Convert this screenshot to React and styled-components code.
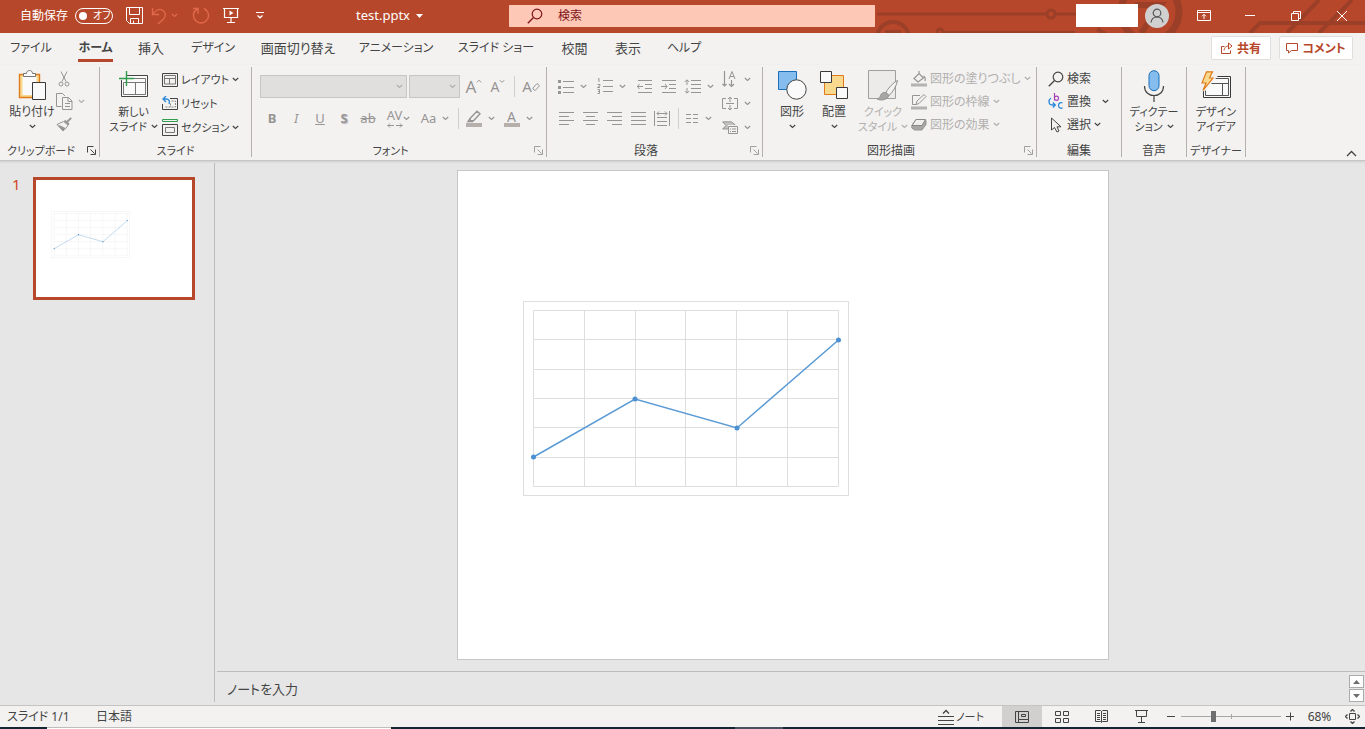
import React from 'react'
import styled, { createGlobalStyle, css } from 'styled-components'

const GlobalStyle = createGlobalStyle`
  * {
    box-sizing: border-box;
  }
  body {
    margin: 0;
    background: #e6e6e6;
    color: #444;
    font-family: 'Noto Sans', 'Noto Sans CJK JP', sans-serif;
    font-size: 12px;
    line-height: 15px;
    font-feature-settings: 'palt';
  }
  button, input, textarea {
    font: inherit;
    font-feature-settings: inherit;
    color: inherit;
    border: none;
    padding: 0;
    margin: 0;
    background: none;
  }
`

const Page = styled.div`
  display: flex;
  flex-direction: column;
  min-height: 100vh;
`

/* ---------- title bar ---------- */

const TitleBar = styled.header`
  position: relative;
  display: grid;
  grid-template-columns: 509fr 366fr 490fr;
  align-items: center;
  height: 33px;
  padding-bottom: 2px;
  background: #b7472a;
  color: #fff;
`
const Pattern = styled.svg`
  position: absolute;
  top: 0;
  right: 0;
`
const TitleLeft = styled.div`
  display: flex;
  align-items: center;
  padding-left: 20px;
`
const AutoSave = styled.label`
  display: flex;
  align-items: center;
  gap: 7px;
  margin-right: 12px;
  white-space: nowrap;
`
const Toggle = styled.span`
  display: flex;
  align-items: center;
  gap: 6px;
  width: 38px;
  height: 16px;
  padding-left: 3px;
  border: 1px solid #fff;
  border-radius: 8px;
  font-size: 10px;
`
const ToggleInput = styled.input`
  appearance: none;
  width: 8px;
  height: 8px;
  border-radius: 50%;
  background: #fff;
`
const QuickButton = styled.button`
  display: flex;
  justify-content: center;
  align-items: center;
  gap: ${p => p.$gap || 0}px;
  width: ${p => p.$w || 32}px;
  height: 24px;
  color: ${p => (p.disabled ? '#e0694b' : '#fff')};
`
const FileName = styled.button`
  display: flex;
  align-items: center;
  gap: 6px;
  margin-left: auto;
  margin-right: 86px;
  font-size: 13px;
`
const Search = styled.label`
  position: relative;
  display: flex;
  align-items: center;
  gap: 15px;
  height: 22px;
  padding-left: 18px;
  background: #fdc8b5;
  color: #80141c;
`
const SearchInput = styled.input`
  flex: 1;
  min-width: 0;
  outline: none;
  &::placeholder {
    color: #80141c;
    opacity: 1;
  }
`
const TitleRight = styled.div`
  position: relative;
  display: flex;
  align-items: center;
  justify-content: flex-end;
`
const Account = styled.div`
  width: 62px;
  height: 23px;
  margin-right: 7px;
  background: #fff;
`
const Avatar = styled.button`
  display: flex;
  align-items: center;
  justify-content: center;
  width: 24px;
  height: 24px;
  margin-right: 12px;
  border-radius: 50%;
  background: #d0d0d0;
  color: #555;
`
const WindowButton = styled.button`
  display: flex;
  align-items: center;
  justify-content: center;
  width: 46px;
  height: 30px;
  color: #fff;
`

/* ---------- tabs ---------- */

const TabBar = styled.nav`
  display: flex;
  align-items: center;
  height: 32px;
  padding: 0 12px 2px 0;
  background: #f3f2f1;
`
const Tab = styled.button`
  display: flex;
  justify-content: center;
  width: ${p => p.$w}px;
  height: 28px;
  font-size: ${p => (p.$kana ? 12 : 13)}px;
  line-height: 28px;
  white-space: nowrap;
  ${p => p.$active && css`
    font-weight: 700;
  `}
`
const TabText = styled.span`
  height: 28px;
  border-bottom: ${p => (p.$active ? '3px solid #b7472a' : 'none')};
`
const ShareButton = styled.button`
  display: flex;
  align-items: center;
  justify-content: center;
  gap: 4px;
  width: ${p => p.$w}px;
  height: 24px;
  margin-left: ${p => (p.$first ? 'auto' : '8px')};
  border: 1px solid #e1dfdd;
  border-radius: 2px;
  background: #fff;
  color: #b7472a;
  font-weight: 700;
  white-space: nowrap;
`

/* ---------- ribbon ---------- */

const Ribbon = styled.section`
  display: flex;
  height: 96px;
  padding-top: 2px;
  background: #f3f2f1;
  border-bottom: 1px solid #c8c6c4;
  box-shadow: 0 1px 2px #d0cecc;
  z-index: 1;
`
const Group = styled.div`
  display: flex;
  flex-direction: column;
  flex: none;
  width: ${p => p.$w}px;
  height: 90px;
  border-right: 1px solid #b3b0ad;
`
const GroupBody = styled.div`
  display: flex;
  flex: 1;
  padding-left: ${p => p.$pad || 0}px;
`
const GroupFoot = styled.div`
  display: flex;
  align-items: center;
  height: 13px;
  white-space: nowrap;
`
const GroupName = styled.span`
  flex: 1;
  text-align: center;
  font-size: ${p => (p.$kana ? 11 : 12)}px;
`
const Launcher = styled.button`
  display: flex;
  width: 12px;
  margin-left: 5px;
  color: ${p => (p.disabled ? '#a19f9d' : '#444')};
`
const BigButton = styled.button`
  display: flex;
  flex-direction: column;
  align-items: center;
  width: ${p => p.$w}px;
  height: 68px;
  font-size: ${p => (p.$kana ? 11 : 12)}px;
  color: ${p => (p.disabled ? '#b1afad' : '#444')};
  white-space: nowrap;
`
const BigIcon = styled.span`
  display: flex;
  align-items: center;
  justify-content: center;
  height: 37px;
`
const BigLine = styled.span`
  display: flex;
  align-items: center;
  justify-content: center;
  gap: 4px;
  height: 15px;
`
const Stack = styled.div`
  display: flex;
  flex-direction: column;
  gap: ${p => p.$gap || 0}px;
  padding-top: ${p => p.$gap || 0}px;
`
const SmallButton = styled.button`
  display: flex;
  align-items: center;
  gap: ${p => p.$gap || 3}px;
  height: 23px;
  font-size: ${p => (p.$kana ? 11 : 12)}px;
  color: ${p => (p.disabled ? '#b1afad' : '#444')};
  white-space: nowrap;
  svg:first-child {
    color: ${p => (p.disabled ? '#979593' : '#444')};
  }
`
const WideLabel = styled.span`
  width: 32px;
  text-align: left;
`
const FontRows = styled.div`
  display: flex;
  flex-direction: column;
  gap: 8px;
  padding-top: 7px;
`
const Row = styled.div`
  display: flex;
  align-items: center;
  height: 24px;
`
const Combo = styled.button`
  display: flex;
  align-items: center;
  justify-content: flex-end;
  width: ${p => p.$w}px;
  height: 23px;
  margin-right: 2px;
  padding-right: 3px;
  border: 1px solid #c8c6c4;
  background: #e1dfdd;
  color: #b1afad;
`
const Tool = styled.button`
  display: flex;
  align-items: center;
  justify-content: center;
  gap: ${p => (p.$tight ? 0 : 6)}px;
  width: ${p => p.$w || 24}px;
  height: 24px;
  color: #979593;
`
const Glyph = styled.span`
  font-size: ${p => p.$size || 13}px;
  font-weight: ${p => (p.$bold ? 700 : 400)};
  font-style: ${p => (p.$italic ? 'italic' : 'normal')};
  text-decoration: ${p => p.$line || 'none'};
  text-shadow: ${p => (p.$shadow ? '1px 1px 1px #b5b9c4' : 'none')};
`
const Rule = styled.span`
  width: 1px;
  height: 21px;
  margin: 0 4px;
  background: #d2d0ce;
`
const Collapse = styled.button`
  align-self: flex-end;
  margin-left: auto;
  padding: 0 8px 0 0;
`

/* ---------- workspace ---------- */

const Workspace = styled.main`
  display: flex;
  flex: 1;
  min-height: 0;
  padding-top: 2px;
`
const Thumbs = styled.aside`
  display: flex;
  align-items: flex-start;
  flex: none;
  width: 215px;
  margin-bottom: 3px;
  padding: 14px 0 0 12px;
  border-right: 1px solid #bebcba;
`
const ThumbNumber = styled.span`
  width: 21px;
  color: #d24726;
  font-size: 15px;
`
const Thumb = styled.button`
  width: 162px;
  border: 3px solid #b7472a;
  background: #fff;
  svg {
    display: block;
    width: 100%;
  }
`
const Editor = styled.div`
  display: flex;
  flex-direction: column;
  flex: 1;
  min-width: 0;
  padding-left: 2px;
`
const Canvas = styled.div`
  display: flex;
  justify-content: center;
  flex: 1;
  padding: 7px 16px 11px 0;
`
const Slide = styled.div`
  width: 652px;
  border: 1px solid #c6c6c6;
  background: #fff;
  svg {
    display: block;
    width: 100%;
    height: 100%;
  }
`
const Notes = styled.div`
  display: flex;
  align-items: center;
  height: 34px;
  border-top: 1px solid #bebcba;
`
const NotesInput = styled.textarea`
  flex: 1;
  height: 20px;
  padding-left: 10px;
  resize: none;
  outline: none;
  font-size: 13px;
  line-height: 20px;
  &::placeholder {
    color: #444;
    opacity: 1;
  }
`
const Pager = styled.div`
  display: flex;
  flex-direction: column;
  gap: 1px;
  padding-right: 1px;
`
const PagerButton = styled.button`
  display: flex;
  align-items: center;
  justify-content: center;
  width: 15px;
  height: 13px;
  border: 1px solid #ababab;
  background: #fff;
  color: #6e6e6e;
`

/* ---------- status bar ---------- */

const StatusBar = styled.footer`
  display: flex;
  align-items: center;
  height: 22px;
  padding-left: 7px;
  border-top: 1px solid #c6c4c2;
  background: #f3f2f1;
`
const StatusText = styled.span`
  width: ${p => p.$w}px;
`
const NotesToggle = styled.button`
  display: flex;
  align-items: center;
  gap: 2px;
  margin-left: auto;
  margin-right: 18px;
  font-size: 11px;
`
const ViewButton = styled.button`
  display: flex;
  align-items: center;
  justify-content: center;
  width: 40px;
  height: 21px;
  background: ${p => (p.$active ? '#d2d0ce' : 'none')};
`
const ZoomButton = styled.button`
  display: flex;
  justify-content: center;
  align-items: center;
  width: 19px;
  height: 20px;
`
const ZoomSlider = styled.input`
  appearance: none;
  width: 100px;
  height: 14px;
  background:
    linear-gradient(#a6a6a6, #a6a6a6) 50px center / 1px 5px no-repeat,
    linear-gradient(#a6a6a6, #a6a6a6) center / 100% 1px no-repeat;
  &::-webkit-slider-thumb {
    appearance: none;
    width: 5px;
    height: 11px;
    background: #6e6e6e;
  }
`
const ZoomValue = styled.button`
  width: 39px;
`
const FitButton = styled.button`
  display: flex;
  justify-content: center;
  width: 26px;
`
const Taskbar = styled.div`
  display: flex;
  height: 2px;
  background: #152534;
`
const TaskbarField = styled.div`
  width: 344px;
  margin-left: 47px;
  border-top: 1px solid #bebebe;
  background: #fff;
`
const TaskbarItem = styled.div`
  width: 48px;
  margin-left: 344px;
  background: #4a5261;
`

/* ---------- icons ---------- */

const Icon = ({ w = 16, h = 16, children }) => (
  <svg width={w} height={h} viewBox={`0 0 ${w} ${h}`} fill="none" stroke="currentColor" aria-hidden="true">
    {children}
  </svg>
)

const Chevron = () => (
  <Icon w={7} h={5}><path d="M.8 1l2.7 2.4L6.200 1" strokeWidth="1.200" /></Icon>
)

const SaveIcon = () => (
  <Icon w={17} h={17}><path d="M.5.5h16v16h-13l-3-3zM3.500.5v7h10v-7M4.500 16.500v-5h8v5M7.500 16.500v-3" /></Icon>
)
const UndoIcon = () => (
  <Icon w={16} h={18}><path d="M1.500 1v6.500H8M1.800 7.200C5 2.500 9 1.500 12 3.500c3 2.200 3 6 .5 8.500L7 17" strokeWidth="1.400" /></Icon>
)
const RedoIcon = () => (
  <Icon w={18} h={18}><path d="M1 1.500h5v5M5.800 2C2 3.800.8 7.500 2 11c1.500 4 6 6 10 4.300 4-1.800 5.500-6 3.800-10C15 3.500 13.500 2.200 12 1.500" strokeWidth="1.400" /></Icon>
)
const PresentIcon = () => (
  <Icon w={16} h={17}><path d="M0 1.500h16M1.500 1.500v9h13v-9M8 10.500v5M4 15.500h8" strokeWidth="1.200" /><path d="M6.500 3.500v5l4-2.500z" fill="currentColor" stroke="none" /></Icon>
)
const CustomizeIcon = () => (
  <Icon w={8} h={7}><path d="M0 .5h8" /><path d="M1.500 3.500L4 5.800l2.500-2.300" strokeWidth="1.300" /></Icon>
)
const SearchIcon = () => (
  <Icon><circle cx="10" cy="6" r="4.800" strokeWidth="1.200" /><path d="M6.500 9.500L.8 15.200" strokeWidth="1.300" /></Icon>
)
const PersonIcon = () => (
  <Icon w={14} h={15}><circle cx="7" cy="5" r="3.800" strokeWidth="1.200" /><path d="M1 14.500c.5-3.500 3-5.500 6-5.500s5.500 2 6 5.500" strokeWidth="1.200" /></Icon>
)
const RibbonModeIcon = () => (
  <Icon w={14} h={11}><path d="M.5.5h13v10H.5zM.5 2.500h13M7 9V4.500M5 6.300l2-2 2 2" /></Icon>
)

const PasteIcon = () => (
  <Icon w={28} h={31}>
    <path d="M1.500 4.500h20v23h-20z" fill="#f9d98e" stroke="#e07b1a" strokeWidth="1.400" />
    <path d="M4.500 6.500h14v18.500h-14z" fill="#fafafa" stroke="none" />
    <path d="M5.500 6.500v-3h3c0-4 6-4 6 0h3v3z" fill="#fafafa" stroke="#777" />
    <path d="M14.500 12.500h13v17h-13z" fill="#fafafa" stroke="#3a3a3a" />
  </Icon>
)
const CutIcon = () => (
  <Icon w={16} h={16}><path d="M5 .5l5 10M11 .5l-5 10" /><circle cx="5" cy="13" r="2" /><circle cx="11" cy="13" r="2" /></Icon>
)
const CopyIcon = () => (
  <Icon w={17} h={17}><path d="M5.500 13.500h-5V.5h6l2.500 2.500M6.500 4.500h6l3.500 3.500v8.500H6.500zM12 4.500v4h4M9 10.500h5M9 13.500h5" /></Icon>
)
const BrushIcon = () => (
  <Icon w={16} h={15}>
    <path d="M15.200.8L11 5M8.500 3.500l4.500 4" strokeWidth="1.800" />
    <path d="M7.500 4.500L1 7.500l6 6.500c2-1.500 3.800-3.500 5-6z" />
    <path d="M3 8l6.500 3L7 14 2.500 9z" fill="currentColor" stroke="none" />
  </Icon>
)
const NewSlideIcon = () => (
  <Icon w={31} h={30}>
    <path d="M3.500 4.500h26v21h-26z" stroke="#444" fill="#fafafa" />
    <path d="M5.500 11.500h22v12h-22zM5.500 7.500h22v4M17.500 11.500v12" stroke="#777" />
    <path d="M2 0h7v9H2z" fill="#f3f2f1" stroke="none" />
    <path d="M8.500 0v15M1 7.500h15" stroke="#2e9e4c" strokeWidth="1.400" />
  </Icon>
)
const LayoutIcon = () => (
  <Icon w={16} h={14}><path d="M.5.5h15v13H.5z" /><path d="M2.500 2.500h11v8.500h-11zM2.500 5.500h11M7.500 5.500v5.500" stroke="#777" /></Icon>
)
const ResetIcon = () => (
  <Icon w={16} h={15}>
    <path d="M8 2.500h7.500v11H.5V8" />
    <path d="M9.500 5h4v6h-11M8.500 7.500v3.500" stroke="#888" strokeDasharray="2 1" />
    <path d="M4 0L1 3l3 3M1 3h3c3 0 4 2 3 5" stroke="#2b88d8" strokeWidth="1.300" />
  </Icon>
)
const SectionIcon = () => (
  <Icon w={16} h={17}><path d="M.5.5h15v2H.5z" stroke="#2e9e4c" /><path d="M.5 5.500h15v11H.5z" /><path d="M3.500 8.500h9v5h-9z" stroke="#777" /></Icon>
)
const LauncherIcon = () => (
  <Icon w={9} h={9}><path d="M.5 6.500v-6h6M3.500 3.500l4 4M8.500 3.500v5h-5" /></Icon>
)
const ResizeMark = ({ down }) => (
  <Icon w={6} h={14}><path d={down ? 'M.8 1.200L3 3.400l2.200-2.200' : 'M.8 3.400L3 1.200l2.200 2.200'} /></Icon>
)
const EraserIcon = () => (
  <Icon w={8} h={12}><path d="M1 8l4-4.500 2.500 2.200-4 4.500H2.200L1 9z" /></Icon>
)
const SpacingIcon = () => (
  <Icon w={16} h={5}><path d="M.5 2.500H7M9 2.500h6.500M3 .5l-2 2 2 2M13 .5l2 2-2 2" /></Icon>
)
const HighlighterIcon = () => (
  <Icon w={16} h={17}><path d="M4 8.500L11 1.200l3 2.600-6.500 7H4.500zM4.500 8L2 11.500h5" strokeWidth="1.400" /><path d="M0 13h16v4H0z" fill="#b5b0ac" stroke="none" /></Icon>
)
const FontColorBar = styled.span`
  width: 16px;
  height: 17px;
  border-bottom: 4px solid #b5b0ac;
  font-size: 14px;
  line-height: 13px;
  text-align: center;
`

// each row is the start and end of one stroke
const LinesIcon = ({ rows }) => (
  <Icon w={15} h={13}>
    {rows.map(([a, b], i) => <path key={i} d={`M${a} ${i * 4 + 0.5}H${b}`} />)}
  </Icon>
)
const BulletIcon = () => (
  <Icon w={16} h={15}><path d="M5 2.500h11M5 8.500h11M5 13.500h11" /><path d="M0 1h3v3H0zM0 7h3v3H0zM0 12h3v3H0z" fill="currentColor" stroke="none" /></Icon>
)
const NumberIcon = () => (
  <Icon w={16} h={16}><path d="M6 2.500h10M6 8.500h10M6 13.500h10M1 1l1-.5V4M.5 6.500H3v1.200L.5 9.500H3M.5 11.500h2v4h-2M1 13.500h1.500" /></Icon>
)
const IndentIcon = ({ out }) => (
  <Icon w={15} h={13}><path d="M1 .5h14M8 4.500h7M8 8.500h7M1 12.500h14M0 6.500h6" /><path d={out ? 'M2.500 4l-2 2.500 2 2.500' : 'M4 4l2 2.500L4 9'} /></Icon>
)
const LineHeightIcon = () => (
  <Icon w={17} h={15}><path d="M7 1.500h10M7 5.500h10M7 9.500h10M7 13.500h10M3 1v5M3 9v5M.8 3L3 .8 5.200 3M.8 12L3 14.200 5.200 12" /></Icon>
)
const DistributeIcon = () => (
  <Icon w={16} h={17}><path d="M.5 1v15M15.500 1v15M3 7.500h10M3 11.500h10M3 15.500h10M3 3.500h10M5 1.500l-2 2 2 2M11 1.500l2 2-2 2" /></Icon>
)
const ColumnsIcon = () => (
  <Icon w={13} h={9}><path d="M0 .5h5M0 4.500h5M0 8.500h5M7 .5h5M7 4.500h5M7 8.500h5" /></Icon>
)
const TextDirectionIcon = () => (
  <Icon w={16} h={17}><path d="M2.500 0v15M.5 13l2 2 2-2M9.500 9v6M7 13l2.500 2.500L12 13" strokeWidth="1.200" /><path d="M7 8l3-7.500L13 8M8 5.500h4" /></Icon>
)
const AlignTextIcon = () => (
  <Icon w={16} h={15}><path d="M4 2.500H.5v10H4M12 2.500h3.500v10H12M4 7.500h8M8 1v5M8 9v5M6 3l2-2 2 2M6 12l2 2 2-2" /></Icon>
)
const SmartArtIcon = () => (
  <Icon w={16} h={13}><path d="M0 1h10l4 3H6v4H0l4-3.500z" fill="#c4c2c0" stroke="none" /><path d="M6 8H.8L4 4.500.8.800H9.500l3.500 3M6.500 5.500h9v7h-9zM8 8h1M10 8h4M8 10.500h1M10 10.500h4" /></Icon>
)

const ShapesIcon = () => (
  <Icon w={29} h={29}><path d="M.5.5h18v18H.5z" fill="#84bdee" stroke="#1a6fb8" /><circle cx="18.500" cy="18.500" r="9.700" fill="#fafafa" stroke="#444" /></Icon>
)
const ArrangeIcon = () => (
  <Icon w={28} h={29}>
    <path d="M4.500 4.500h19v19h-19z" fill="#f9d98e" stroke="#e07b1a" />
    <path d="M.5.500h11v11H.5zM16.500 16.500h11v11h-11z" fill="#fafafa" stroke="#3a3a3a" />
  </Icon>
)
const QuickStyleIcon = () => (
  <Icon w={30} h={31}>
    <path d="M.5.5h27v28H.5z" fill="#ecebea" stroke="#a19f9d" />
    <path d="M29.500 10.500c-4 2-9 7-11.500 12l3 3c4-4 7.500-9 8.500-15z" fill="#f3f2f1" stroke="#8f8d8b" />
    <path d="M18 22.500c-3-.5-5 1-5.500 3s-1.500 3-3.500 3.500c4 2 10 1 12-3.500z" fill="#a8a6a4" stroke="#979593" />
  </Icon>
)
const FillIcon = () => (
  <Icon w={16} h={16}><path d="M3 7.500L8 2.500l4.500 4.500L7 11zM8 2.500V0M12.500 5c2 1 2 3 1.500 5" strokeWidth="1.200" /><path d="M0 12.500h16v3H0z" fill="#b5b3b1" stroke="none" /></Icon>
)
const OutlineIcon = () => (
  <Icon w={16} h={16}><path d="M9 1.500H1.500v9H5M5 10.500l1-3.500 7-6.500 2 2-7 7z" /><path d="M0 12.500h16v3H0z" fill="#b5b3b1" stroke="none" /></Icon>
)
const EffectIcon = () => (
  <Icon w={16} h={14}><path d="M5 1.500h8.500l1.500 1v4L11 12H3.500L.8 10V7.500z" fill="#a8a6a4" /><path d="M5 1.500h9.500L11 7.500H1z" fill="#eee" stroke="#8a8886" /></Icon>
)
const ReplaceIcon = () => (
  <Icon w={16} h={17}>
    <path d="M6.500 0v7.500M6.500 4.500c1-2 4-1.800 4 .8s-3 2.700-4 .7" stroke="#a33fb5" strokeWidth="1.200" />
    <path d="M14.500 10c-1.500-1-4 0-4 2.500s2.500 3.400 4 2.200" stroke="#2b88d8" strokeWidth="1.300" />
    <path d="M3 5C0 7 .5 12 4 12h3M4.800 9.500L7.300 12l-2.500 2.500" stroke="#2b88d8" strokeWidth="1.300" />
  </Icon>
)
const CursorIcon = () => (
  <Icon w={16} h={16}><path d="M3.500 1v12l3-2.500L9 15l2-1-2-4.200h4z" /></Icon>
)
const MicIcon = () => (
  <Icon w={22} h={32}><rect x="6" y=".7" width="10" height="20" rx="5" fill="#84bdee" stroke="#1a6fb8" /><path d="M1.500 16c0 6 4 9.500 9.500 9.500s9.500-3.500 9.500-9.500M11 25.500V32" strokeWidth="1.200" /></Icon>
)
const IdeasIcon = () => (
  <Icon w={30} h={30}>
    <path d="M2.500 5.500h27v21h-27z" stroke="#3a3a3a" fill="#fafafa" />
    <path d="M4.500 7.500h23v17h-23zM10 12.500h17.500M21.500 12.500v12" stroke="#555" />
    <path d="M6 .8h6L9 7h3.500L2 19.500 5 12H1z" fill="#f9d98e" stroke="#f3f2f1" strokeWidth="4" />
    <path d="M5.500.8h6L8.500 7H12L2 19.500 5 12H1z" fill="#f9d98e" stroke="#e07b1a" strokeWidth="1.200" />
  </Icon>
)
const ShareIcon = () => (
  <Icon w={12} h={12}><path d="M3.500 4.500h-3v7h9v-3M3 8.500C3.500 5 5.500 4 8 4M7.500 1L11 4 7.500 7z" /></Icon>
)
const CommentIcon = () => (
  <Icon w={12} h={12}><path d="M.5 1.500h11v7h-6l-3 2.500V8.500h-2z" /></Icon>
)

/* ---------- slide content ---------- */

const points = [[75.5, 286], [177, 228], [279, 257], [380.5, 169]]
const steps = [0, 1, 2, 3, 4, 5, 6]

const Chart = () => (
  <svg viewBox="0 0 650 488" role="img" aria-label="折れ線グラフ">
    <g fill="none" stroke="#dedede">
      <rect x="65.500" y="130.500" width="325" height="194" />
      {steps.map(i => <path key={`h${i}`} d={`M75.500 ${Math.round(139 + i * 29.3) + 0.5}H380.500`} />)}
      {steps.map(i => <path key={`v${i}`} d={`M${Math.round(75 + i * 50.8) + 0.5} 139.500V315.500`} />)}
    </g>
    <polyline points={points.join(' ')} fill="none" stroke="#5b9bd5" strokeWidth="1.500" />
    {points.map(([x, y]) => <circle key={x} cx={x} cy={y} r="2.500" fill="#4a90d2" />)}
  </svg>
)

const tabs = [
  { name: 'ファイル', w: 62, kana: true },
  { name: 'ホーム', w: 67, kana: true, active: true },
  { name: '挿入', w: 44 },
  { name: 'デザイン', w: 80, kana: true },
  { name: '画面切り替え', w: 90 },
  { name: 'アニメーション', w: 106, kana: true },
  { name: 'スライド ショー', w: 94, kana: true },
  { name: '校閲', w: 63 },
  { name: '表示', w: 44 },
  { name: 'ヘルプ', w: 68, kana: true },
]

const RibbonGroup = ({ name, w, pad, kana, launcher, disabled, children }) => (
  <Group $w={w}>
    <GroupBody $pad={pad}>{children}</GroupBody>
    <GroupFoot>
      <GroupName $kana={kana}>{name}</GroupName>
      {launcher && <Launcher disabled={disabled} aria-label={`${name}の設定`}><LauncherIcon /></Launcher>}
    </GroupFoot>
  </Group>
)

const App = () => {
  return (
    <Page>
      <GlobalStyle />
      <TitleBar>
        <Pattern width="490" height="33" viewBox="0 0 490 33" fill="none" stroke="#9b3f28" strokeWidth="4">
          <path d="M2 14h170M181 14h80" strokeWidth="3" />
          <circle cx="176" cy="14" r="4" strokeWidth="3" />
          <circle cx="18" cy="38" r="16" />
          <path d="M10 32h16" />
          <path d="M68 33h132" />
          <circle cx="65" cy="32" r="3" strokeWidth="3" />
          <path d="M222 29l10 6" />
          <circle cx="275" cy="12" r="29" strokeWidth="7" />
          <path d="M260 5h26l-20 28" strokeWidth="6" />
          <path d="M375 33l10-10h105M412 33L444 0M444 33l33-33" />
        </Pattern>
        <TitleLeft>
          <AutoSave>
            自動保存
            <Toggle><ToggleInput type="checkbox" />オフ</Toggle>
          </AutoSave>
          <QuickButton $w={18} aria-label="保存"><SaveIcon /></QuickButton>
          <QuickButton $w={42} $gap={4} disabled aria-label="元に戻す"><UndoIcon /><Chevron /></QuickButton>
          <QuickButton disabled aria-label="やり直し"><RedoIcon /></QuickButton>
          <QuickButton $w={28} aria-label="最初から"><PresentIcon /></QuickButton>
          <QuickButton $w={30} aria-label="カスタマイズ"><CustomizeIcon /></QuickButton>
          <FileName>
            test.pptx
            <Icon w={7} h={4}><path d="M0 0h7L3.500 4z" fill="#fff" stroke="none" /></Icon>
          </FileName>
        </TitleLeft>
        <Search>
          <SearchIcon />
          <SearchInput placeholder="検索" aria-label="検索" />
        </Search>
        <TitleRight>
          <Account />
          <Avatar aria-label="アカウント"><PersonIcon /></Avatar>
          <WindowButton aria-label="リボンの表示オプション"><RibbonModeIcon /></WindowButton>
          <WindowButton aria-label="最小化"><Icon w={10} h={2}><path d="M0 .5h10" /></Icon></WindowButton>
          <WindowButton aria-label="元のサイズに戻す"><Icon w={10} h={10}><path d="M.5 2.500h7v7h-7zM2.500 2.500v-2h7v7h-2" /></Icon></WindowButton>
          <WindowButton aria-label="閉じる"><Icon w={10} h={10}><path d="M0 0l10 10M10 0L0 10" /></Icon></WindowButton>
        </TitleRight>
      </TitleBar>

      <TabBar>
        {tabs.map(({ name, w, kana, active }) => (
          <Tab key={name} $w={w} $kana={kana} $active={active}>
            <TabText $active={active}>{name}</TabText>
          </Tab>
        ))}
        <ShareButton $w={60} $first><ShareIcon />共有</ShareButton>
        <ShareButton $w={74}><CommentIcon />コメント</ShareButton>
      </TabBar>

      <Ribbon>
        <RibbonGroup name="クリップボード" w={100} pad={8} kana launcher>
          <BigButton $w={48}>
            <BigIcon><PasteIcon /></BigIcon>
            <BigLine>貼り付け</BigLine>
            <BigLine><Chevron /></BigLine>
          </BigButton>
          <Stack>
            <SmallButton disabled aria-label="切り取り"><CutIcon /></SmallButton>
            <SmallButton $gap={5} disabled aria-label="コピー"><CopyIcon /><Chevron /></SmallButton>
            <SmallButton disabled aria-label="書式のコピー"><BrushIcon /></SmallButton>
          </Stack>
        </RibbonGroup>

        <RibbonGroup name="スライド" w={152} pad={5} kana>
          <BigButton $w={57} $kana>
            <BigIcon><NewSlideIcon /></BigIcon>
            <BigLine>新しい</BigLine>
            <BigLine>スライド<Chevron /></BigLine>
          </BigButton>
          <Stack $gap={1}>
            <SmallButton $kana><LayoutIcon />レイアウト<Chevron /></SmallButton>
            <SmallButton $kana><ResetIcon />リセット</SmallButton>
            <SmallButton $kana><SectionIcon />セクション<Chevron /></SmallButton>
          </Stack>
        </RibbonGroup>

        <RibbonGroup name="フォント" w={295} pad={8} kana launcher disabled>
          <FontRows>
            <Row>
              <Combo $w={147} aria-label="フォント"><Chevron /></Combo>
              <Combo $w={51} aria-label="フォント サイズ"><Chevron /></Combo>
              <Tool $tight><Glyph $size={17}>A</Glyph><ResizeMark /></Tool>
              <Tool $tight><Glyph $size={14}>A</Glyph><ResizeMark down /></Tool>
              <Rule />
              <Tool $tight><Glyph $size={15}>A</Glyph><EraserIcon /></Tool>
            </Row>
            <Row>
              <Tool><Glyph $bold>B</Glyph></Tool>
              <Tool><Glyph $italic>I</Glyph></Tool>
              <Tool><Glyph $line="underline">U</Glyph></Tool>
              <Tool><Glyph $bold $shadow>S</Glyph></Tool>
              <Tool><Glyph $line="line-through">ab</Glyph></Tool>
              <Tool $w={36} $tight>
                <Stack><Glyph>AV</Glyph><SpacingIcon /></Stack>
                <Chevron />
              </Tool>
              <Tool $w={38}><Glyph>Aa</Glyph><Chevron /></Tool>
              <Rule />
              <Tool $w={34}><HighlighterIcon /><Chevron /></Tool>
              <Tool $w={42}><FontColorBar>A</FontColorBar><Chevron /></Tool>
            </Row>
          </FontRows>
        </RibbonGroup>

        <RibbonGroup name="段落" w={216} pad={7} launcher disabled>
          <FontRows>
            <Row>
              <Tool $w={36}><BulletIcon /><Chevron /></Tool>
              <Tool $w={42}><NumberIcon /><Chevron /></Tool>
              <Tool><IndentIcon out /></Tool>
              <Tool><IndentIcon /></Tool>
              <Tool $w={38}><LineHeightIcon /><Chevron /></Tool>
            </Row>
            <Row>
              <Tool><LinesIcon rows={[[0, 15], [0, 10], [0, 15], [0, 10]]} /></Tool>
              <Tool><LinesIcon rows={[[0, 15], [3, 12], [0, 15], [3, 12]]} /></Tool>
              <Tool><LinesIcon rows={[[0, 15], [5, 15], [0, 15], [5, 15]]} /></Tool>
              <Tool><LinesIcon rows={[[0, 15], [0, 15], [0, 15], [0, 15]]} /></Tool>
              <Tool><DistributeIcon /></Tool>
              <Rule />
              <Tool $w={32}><ColumnsIcon /><Chevron /></Tool>
            </Row>
          </FontRows>
          <Stack>
            <Tool $w={36}><TextDirectionIcon /><Chevron /></Tool>
            <Tool $w={36}><AlignTextIcon /><Chevron /></Tool>
            <Tool $w={36}><SmartArtIcon /><Chevron /></Tool>
          </Stack>
        </RibbonGroup>

        <RibbonGroup name="図形描画" w={274} pad={8} launcher disabled>
          <BigButton $w={42}>
            <BigIcon><ShapesIcon /></BigIcon>
            <BigLine>図形</BigLine>
            <BigLine><Chevron /></BigLine>
          </BigButton>
          <BigButton $w={42}>
            <BigIcon><ArrangeIcon /></BigIcon>
            <BigLine>配置</BigLine>
            <BigLine><Chevron /></BigLine>
          </BigButton>
          <BigButton $w={56} $kana disabled>
            <BigIcon><QuickStyleIcon /></BigIcon>
            <BigLine>クイック</BigLine>
            <BigLine>スタイル<Chevron /></BigLine>
          </BigButton>
          <Stack>
            <SmallButton disabled><FillIcon />図形の塗りつぶし<Chevron /></SmallButton>
            <SmallButton disabled><OutlineIcon />図形の枠線<Chevron /></SmallButton>
            <SmallButton disabled><EffectIcon />図形の効果<Chevron /></SmallButton>
          </Stack>
        </RibbonGroup>

        <RibbonGroup name="編集" w={85} pad={11}>
          <Stack>
            <SmallButton><SearchIcon />検索</SmallButton>
            <SmallButton><ReplaceIcon /><WideLabel>置換</WideLabel><Chevron /></SmallButton>
            <SmallButton><CursorIcon />選択<Chevron /></SmallButton>
          </Stack>
        </RibbonGroup>

        <RibbonGroup name="音声" w={65}>
          <BigButton $w={64} $kana>
            <BigIcon><MicIcon /></BigIcon>
            <BigLine>ディクテー</BigLine>
            <BigLine>ション<Chevron /></BigLine>
          </BigButton>
        </RibbonGroup>

        <RibbonGroup name="デザイナー" w={59} kana>
          <BigButton $w={58} $kana>
            <BigIcon><IdeasIcon /></BigIcon>
            <BigLine>デザイン</BigLine>
            <BigLine>アイデア</BigLine>
          </BigButton>
        </RibbonGroup>

        <Collapse aria-label="リボンを折りたたむ">
          <Icon w={11} h={7}><path d="M1 6l4.500-4.500L10 6" strokeWidth="1.300" /></Icon>
        </Collapse>
      </Ribbon>

      <Workspace>
        <Thumbs>
          <ThumbNumber>1</ThumbNumber>
          <Thumb aria-label="スライド 1"><Chart /></Thumb>
        </Thumbs>
        <Editor>
          <Canvas>
            <Slide><Chart /></Slide>
          </Canvas>
          <Notes>
            <NotesInput placeholder="ノートを入力" aria-label="ノート" />
            <Pager>
              <PagerButton aria-label="前のスライド"><Icon w={7} h={4}><path d="M0 4h7L3.500 0z" fill="currentColor" stroke="none" /></Icon></PagerButton>
              <PagerButton aria-label="次のスライド"><Icon w={7} h={4}><path d="M0 0h7L3.500 4z" fill="currentColor" stroke="none" /></Icon></PagerButton>
            </Pager>
          </Notes>
        </Editor>
      </Workspace>

      <StatusBar>
        <StatusText $w={89}>スライド 1/1</StatusText>
        <StatusText $w={60}>日本語</StatusText>
        <NotesToggle>
          <Icon w={16} h={16}><path d="M0 7.500h16M0 11.500h16M0 15.500h16" /><path d="M5 4.500l3-3 3 3" strokeWidth="1.400" /></Icon>
          ノート
        </NotesToggle>
        <ViewButton $active aria-label="標準"><Icon w={14} h={12}><path d="M.5.5h13v11H.5zM3.500.5v11M3.500 8.500h10M6.500 3.500h4v2h-4z" /></Icon></ViewButton>
        <ViewButton aria-label="スライド一覧"><Icon w={14} h={12}><path d="M.5.5h5v4h-5zM8.500.5h5v4h-5zM.5 7.500h5v4h-5zM8.500 7.500h5v4h-5z" /></Icon></ViewButton>
        <ViewButton aria-label="閲覧表示"><Icon w={14} h={13}><path d="M.5.5h5l1 1 1-1h5v11h-5l-1 1-1-1h-5zM6.500 1v11M2 3.500h3M2 5.500h3M2 7.500h3M2 9.500h3M8 3.500h3M8 5.500h3M8 7.500h3M8 9.500h3" /></Icon></ViewButton>
        <ViewButton aria-label="スライド ショー"><Icon w={14} h={13}><path d="M0 .5h13M1.500.5v6h10v-6M6.500 6.500v6M3 12.500h7" /></Icon></ViewButton>
        <ZoomButton aria-label="縮小"><Icon w={9} h={9}><path d="M0 4.500h8" /></Icon></ZoomButton>
        <ZoomSlider type="range" min="0" max="100" defaultValue="32" aria-label="ズーム" />
        <ZoomButton aria-label="拡大"><Icon w={9} h={9}><path d="M0 4.500h8M4.500.500v8" /></Icon></ZoomButton>
        <ZoomValue>68%</ZoomValue>
        <FitButton aria-label="ウィンドウに合わせる"><Icon w={15} h={15}><path d="M4.500 4.500h6v6h-6z" /><path d="M5.500 2.500l2-2 2 2M5.500 12.500l2 2 2-2M2.500 5.500l-2 2 2 2M12.500 5.500l2 2-2 2" strokeWidth="1.300" /></Icon></FitButton>
      </StatusBar>
      <Taskbar>
        <TaskbarField />
        <TaskbarItem />
      </Taskbar>
    </Page>
  )
}

export default App
